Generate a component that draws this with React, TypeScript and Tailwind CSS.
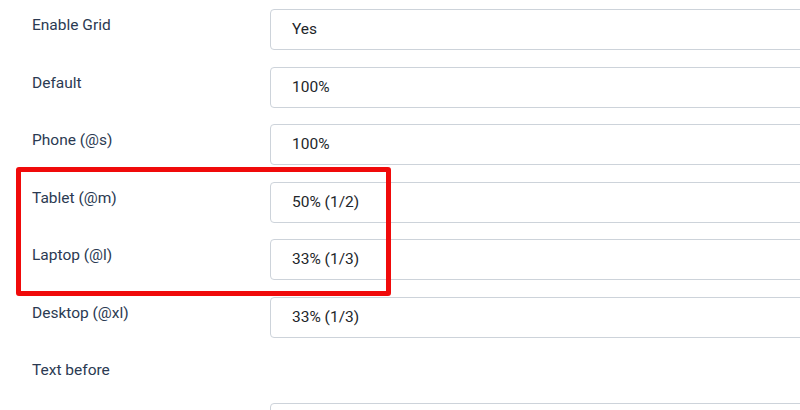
const rows = [
  { label: 'Enable Grid', value: 'Yes' },
  { label: 'Default', value: '100%' },
  { label: 'Phone (@s)', value: '100%' },
  { label: 'Tablet (@m)', value: '50% (1/2)' },
  { label: 'Laptop (@l)', value: '33% (1/3)' },
  { label: 'Desktop (@xl)', value: '33% (1/3)' },
];

export default function App() {
  return (
    <div
      className="relative w-[800px] h-[410px] overflow-hidden bg-white"
      style={{ fontFamily: 'Roboto, "Liberation Sans", sans-serif' }}
    >
      <div className="pt-[9px] pl-[32px] w-[900px]">
        {rows.map((r, i) => (
          <div key={r.label} className={`flex ${i % 2 === 0 ? 'mb-[17px]' : 'mb-4'}`}>
            <div className="w-[238px] shrink-0 pt-[5px] text-[15.5px] leading-[22px] text-[#2b3a52]">
              {r.label}
            </div>
            <div className="flex-1 h-[41px] flex items-center pl-[21px] rounded-[4px] border border-[#cdd3da] text-[15.5px] text-[#22262a]">
              {r.value}
            </div>
          </div>
        ))}
        <div className="pt-[5px] text-[15.5px] leading-[22px] text-[#2b3a52]">Text before</div>
        <div className="ml-[238px] mt-[22px] h-[41px] rounded-[4px] border border-[#cdd3da]" />
      </div>

      {/* highlight annotation */}
      <div className="absolute left-[16px] top-[167px] w-[375px] h-[129px] border-[5px] border-[#f00a0a] rounded-[3px]" />
    </div>
  );
}
